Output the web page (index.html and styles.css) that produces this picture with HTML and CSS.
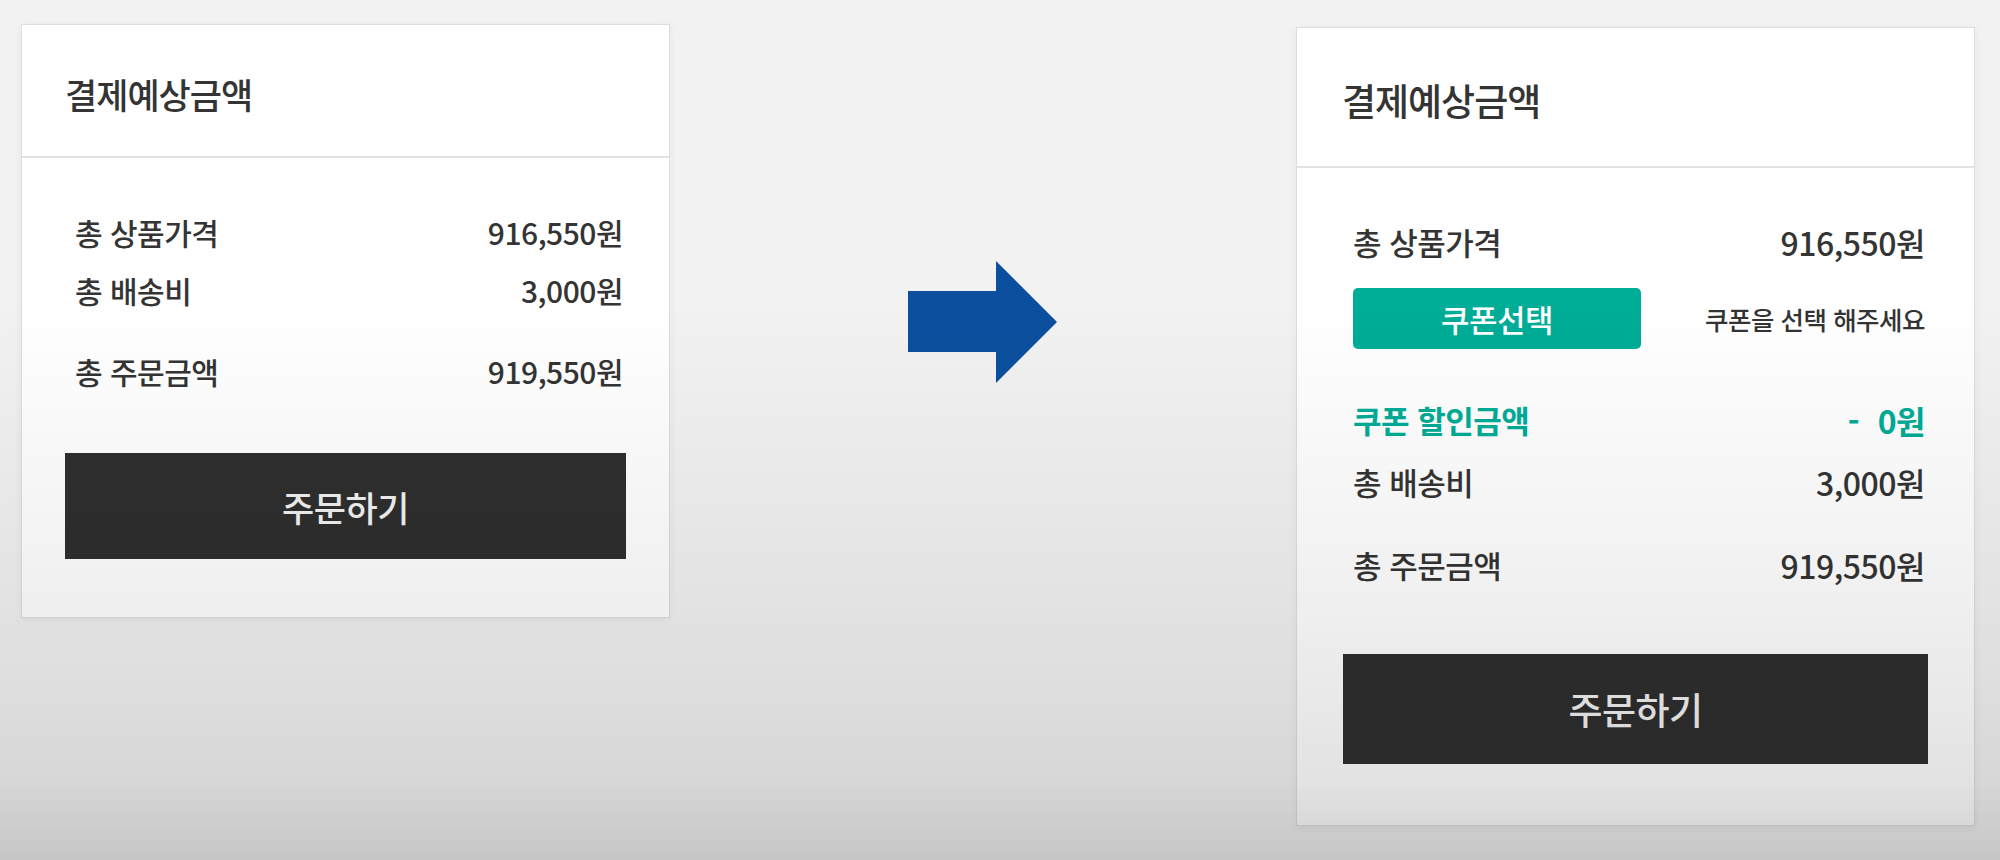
FILE: index.html
```html
<!DOCTYPE html>
<html lang="ko">
<head>
    <meta charset="UTF-8">
    <meta name="viewport" content="width=device-width, initial-scale=1.0">
    <title>결제예상금액</title>
    <link rel="stylesheet" href="styles.css">
</head>
<body>
    <div class="compare">
        <!-- before -->
        <div class="summary">
            <div class="summary-head">
                <h2>결제예상금액</h2>
            </div>
            <div class="summary-body">
                <div class="summary-row">
                    <span>총 상품가격</span>
                    <span class="price">916,550원</span>
                </div>
                <div class="summary-row">
                    <span>총 배송비</span>
                    <span class="price">3,000원</span>
                </div>
                <div class="summary-row total">
                    <span>총 주문금액</span>
                    <span class="price">919,550원</span>
                </div>
                <button class="order-button">주문하기</button>
            </div>
        </div>

        <div class="arrow">
            <svg width="149" height="122" viewBox="0 0 149 122">
                <polygon points="0,30 88,30 88,0 149,61 88,122 88,91 0,91" fill="#0b4f9e"/>
            </svg>
        </div>

        <!-- after -->
        <div class="summary large">
            <div class="summary-head">
                <h2>결제예상금액</h2>
            </div>
            <div class="summary-body">
                <div class="summary-row">
                    <span>총 상품가격</span>
                    <span class="price">916,550원</span>
                </div>
                <div class="coupon-row">
                    <button class="coupon-button">쿠폰선택</button>
                    <span class="coupon-hint">쿠폰을 선택 해주세요</span>
                </div>
                <div class="summary-row discount">
                    <span>쿠폰 할인금액</span>
                    <span class="price">- 0원</span>
                </div>
                <div class="summary-row">
                    <span>총 배송비</span>
                    <span class="price">3,000원</span>
                </div>
                <div class="summary-row total">
                    <span>총 주문금액</span>
                    <span class="price">919,550원</span>
                </div>
                <button class="order-button">주문하기</button>
            </div>
        </div>
    </div>
</body>
</html>
```

FILE: styles.css
```css
body {
    font-family: 'Noto Sans CJK KR', 'Noto Sans', sans-serif;
    font-weight: 500;
    margin: 0;
    padding: 0;
    background-color: #f2f2f2;
    height: 860px;
    overflow: hidden;
    color: #343434;
}
/* screen-wide shading of the original capture */
body::after {
    content: "";
    position: fixed;
    inset: 0;
    pointer-events: none;
    background: linear-gradient(to bottom,
        rgba(0, 0, 0, 0) 0,
        rgba(0, 0, 0, 0) 300px,
        rgba(0, 0, 0, 0.06) 600px,
        rgba(0, 0, 0, 0.11) 780px,
        rgba(0, 0, 0, 0.18) 860px);
}
.compare {
    display: flex;
    align-items: flex-start;
    padding: 24px 0 0 21px;
}
.summary {
    width: 649px;
    background-color: #ffffff;
    border: 1px solid #dedede;
    box-shadow: 0 2px 8px rgba(0, 0, 0, 0.06);
    box-sizing: border-box;
}
.summary-head {
    height: 133px;
    padding: 0 43px;
    display: flex;
    align-items: center;
    border-bottom: 2px solid #e2e2e2;
    box-sizing: border-box;
}
h2 {
    margin: 6px 0 0;
    font-size: 35px;
    font-weight: 500;
    letter-spacing: -1px;
    color: #343434;
}
.summary-body {
    padding: 54px 43px 58px;
}
.summary-row {
    display: flex;
    justify-content: space-between;
    height: 40px;
    line-height: 40px;
    padding: 0 3px 0 10px;
    font-size: 30px;
    letter-spacing: -0.5px;
    margin-bottom: 18px;
}
.summary-row .price {
    font-size: 30px;
}
.summary-row.total {
    margin-top: 41px;
}
.order-button {
    display: block;
    width: 100%;
    height: 106px;
    margin-top: 62px;
    background-color: #2f2f2f;
    color: #f2f2f2;
    border: none;
    font-family: inherit;
    font-weight: 500;
    font-size: 35px;
    letter-spacing: -0.5px;
    cursor: pointer;
}
.arrow {
    margin: 237px 239px 0 238px;
    line-height: 0;
}

/* second card is drawn a little larger */
.large {
    width: 679px;
    margin-top: 3px;
}
.large .summary-head {
    height: 140px;
    padding: 0 45px;
}
.large h2 {
    font-size: 37px;
}
.large .summary-body {
    padding: 53px 46px 61px;
}
.large .summary-row {
    height: 42px;
    line-height: 42px;
    font-size: 31px;
    padding: 0 3px 0 10px;
    margin-bottom: 20px;
}
.large .summary-row .price {
    font-size: 32px;
}
.large .summary-row.total {
    margin-top: 41px;
}
.coupon-row {
    display: flex;
    justify-content: space-between;
    align-items: center;
    padding: 0 3px 0 10px;
    margin: 25px 0 50px;
}
.coupon-button {
    width: 288px;
    height: 61px;
    background-color: #00ad97;
    color: #ffffff;
    border: none;
    border-radius: 5px;
    font-family: inherit;
    font-weight: 500;
    font-size: 31px;
    letter-spacing: -0.5px;
    cursor: pointer;
}
.coupon-hint {
    font-size: 25.5px;
    letter-spacing: -0.5px;
}
.large .discount {
    color: #00ad97;
    font-weight: bold;
    font-size: 31px;
}
.large .discount .price {
    font-size: 32px;
    word-spacing: 10px;
}
.large .order-button {
    height: 110px;
    margin-top: 68px;
    font-size: 37px;
}
```
